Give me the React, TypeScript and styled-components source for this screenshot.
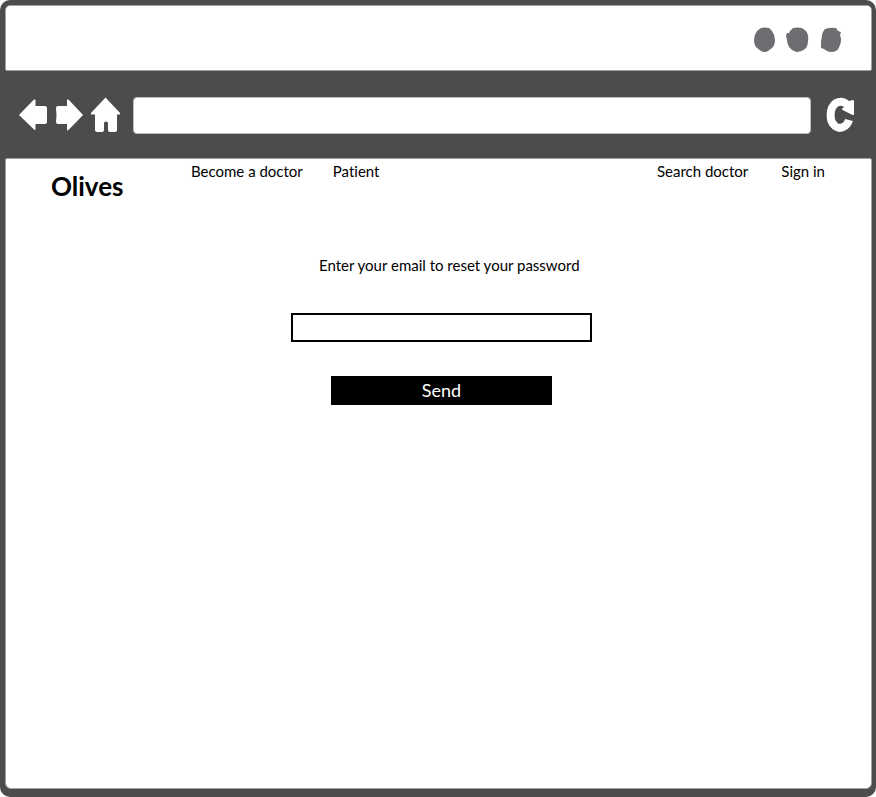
import React from "react";
import styled, { createGlobalStyle } from "styled-components";

const GlobalStyle = createGlobalStyle`
  *, *::before, *::after { box-sizing: border-box; }
  html, body, #root { height: 100%; }
  body {
    margin: 0;
    background: #fff;
    color: #000;
    font-family: Lato, "Open Sans", sans-serif;
    font-variant-ligatures: none;
  }
`;

const BrowserFrame = styled.div`
  display: flex;
  flex-direction: column;
  min-height: 100%;
  padding: 5px 4px 8px 5px;
  border-radius: 10px;
  background: #4c4c4c;
`;

const TitleBar = styled.header`
  display: flex;
  justify-content: flex-end;
  align-items: center;
  height: 66px;
  padding: 4px 29px 0 0;
  border: 1px solid #a0a0a0;
  border-radius: 5px 5px 2px 2px;
  background: #fff;
`;

const Toolbar = styled.div`
  display: flex;
  align-items: center;
  height: 87px;
  padding: 1px 16px 0 14px;
`;

const NavigationButtons = styled.div`
  display: flex;
  align-items: center;
  gap: 7px;
  margin-right: 12px;
`;

const IconButton = styled.button`
  display: flex;
  padding: 0;
  border: 0;
  background: none;
  color: #fff;
  cursor: pointer;

  svg { display: block; }
`;

const AddressInput = styled.input`
  flex: 1;
  min-width: 0;
  height: 37px;
  margin-right: 15px;
  padding: 0 12px;
  border: 1px solid #bdbdbd;
  border-radius: 4px;
  background: #fff;
  font: inherit;
`;

const Page = styled.div`
  flex: 1;
  border: 1px solid #a0a0a0;
  border-radius: 2px 2px 6px 6px;
  background: #fff;
`;

const SiteHeader = styled.div`
  display: flex;
  align-items: flex-start;
  padding: 3px 46px 0 45px;
`;

const Brand = styled.h1`
  width: 140px;
  margin: 8px 0 0;
  font-size: 26px;
  line-height: 32px;
  font-weight: 700;
`;

const SiteNav = styled.nav<{ $gap: number }>`
  display: flex;
  gap: ${({ $gap }) => $gap}px;

  & + & { margin-left: auto; }
`;

const NavLink = styled.a`
  color: inherit;
  font-size: 15px;
  line-height: 18px;
  white-space: nowrap;
  text-decoration: none;
`;

const Main = styled.main`
  padding: 54px 0 0 6px;
`;

const ResetForm = styled.form`
  display: flex;
  flex-direction: column;
  width: 301px;
  max-width: 100%;
  margin: 0 auto;
`;

const FormLabel = styled.label`
  padding-left: 28px;
  font-size: 15px;
  line-height: 18px;
  white-space: nowrap;
`;

const EmailInput = styled.input`
  height: 29px;
  margin-top: 39px;
  padding: 0 8px;
  border: 2px solid #000;
  border-radius: 0;
  background: #fff;
  font: inherit;
`;

const SendButton = styled.button`
  height: 29px;
  margin: 34px 40px 0;
  padding: 0;
  border: 0;
  background: #000;
  color: #fff;
  font: inherit;
  font-size: 18px;
  line-height: 29px;
  cursor: pointer;
`;

const WindowDots = () => (
  <svg width="88" height="26" viewBox="0 0 88 26" fill="#6d6e71" aria-hidden="true">
    <path d="M7 1Q11 0 15 1L18 4Q21 8 21 13T18 21L14 24Q11 26 7 24L3 21Q0 18 0 13T3 4Z" />
    <path d="M36 4L39 1Q44 0 48 1L52 4Q55 8 54 14Q54 19 51 22Q47 25 43 25Q38 24 35 20Q33 16 33 13L32 9L33 6H35Z" />
    <path d="M71 2Q77 0 82 1L84 4L87 5L86 8Q88 13 86 18Q85 22 82 24Q77 26 73 24L70 22L67 21V15L68 8Q69 4 71 2Z" />
  </svg>
);

const BackIcon = () => (
  <svg width="29" height="32" viewBox="0 0 29 32" fill="currentColor" aria-hidden="true">
    <path d="M0 16L15 .5q1.500-.5 1.500 1V7H26q2 0 2 2v14q0 2-2 2h-9.500v5q0 1.500-1.500.5z" />
  </svg>
);

const ForwardIcon = () => (
  <svg width="29" height="32" viewBox="0 0 29 32" fill="currentColor" aria-hidden="true">
    <path d="M28 16L13.500 31q-1.500 1-1.500-.5V25H3q-2 0-2-2l.5-7L1 9q0-2 2-2h9V1.500q0-1.500 1.500-1z" />
  </svg>
);

const HomeIcon = () => (
  <svg width="30" height="36" viewBox="0 0 30 36" fill="currentColor" aria-hidden="true">
    <path d="M14.500 .5L29 16q.5 1.500-1 1.500h-2V33q0 2-2 2h-5q-2 0-2-2v-7q0-1.500-2-1.500t-2 1.500v7q0 2-2 2H6q-2 0-2-2V17.500H1q-1.500 0-1-1.500z" />
  </svg>
);

const ReloadIcon = () => (
  <svg width="30" height="36" viewBox="0 0 30 36" fill="none" stroke="currentColor" aria-hidden="true">
    <path d="M22 9C19 4 14 4 10 6C3 11 3 24 9 29C14 33 21 30 23 23" strokeWidth="8" />
    <path d="M27 4V17L17 12L22 10L20 6Z" fill="currentColor" strokeWidth="2" strokeLinejoin="round" />
  </svg>
);

export default function App() {
  return (
    <>
      <GlobalStyle />
      <BrowserFrame>
        <TitleBar>
          <WindowDots />
        </TitleBar>
        <Toolbar>
          <NavigationButtons>
            <IconButton type="button" aria-label="Back"><BackIcon /></IconButton>
            <IconButton type="button" aria-label="Forward"><ForwardIcon /></IconButton>
            <IconButton type="button" aria-label="Home"><HomeIcon /></IconButton>
          </NavigationButtons>
          <AddressInput type="text" aria-label="Address" />
          <IconButton type="button" aria-label="Reload"><ReloadIcon /></IconButton>
        </Toolbar>
        <Page>
          <SiteHeader>
            <Brand>Olives</Brand>
            <SiteNav $gap={30} aria-label="Main">
              <NavLink href="#doctors">Become a doctor</NavLink>
              <NavLink href="#patient">Patient</NavLink>
            </SiteNav>
            <SiteNav $gap={33} aria-label="Account">
              <NavLink href="#search">Search doctor</NavLink>
              <NavLink href="#signin">Sign in</NavLink>
            </SiteNav>
          </SiteHeader>
          <Main>
            <ResetForm onSubmit={(event) => event.preventDefault()}>
              <FormLabel htmlFor="email">Enter your email to reset your password</FormLabel>
              <EmailInput id="email" type="email" />
              <SendButton type="submit">Send</SendButton>
            </ResetForm>
          </Main>
        </Page>
      </BrowserFrame>
    </>
  );
}
